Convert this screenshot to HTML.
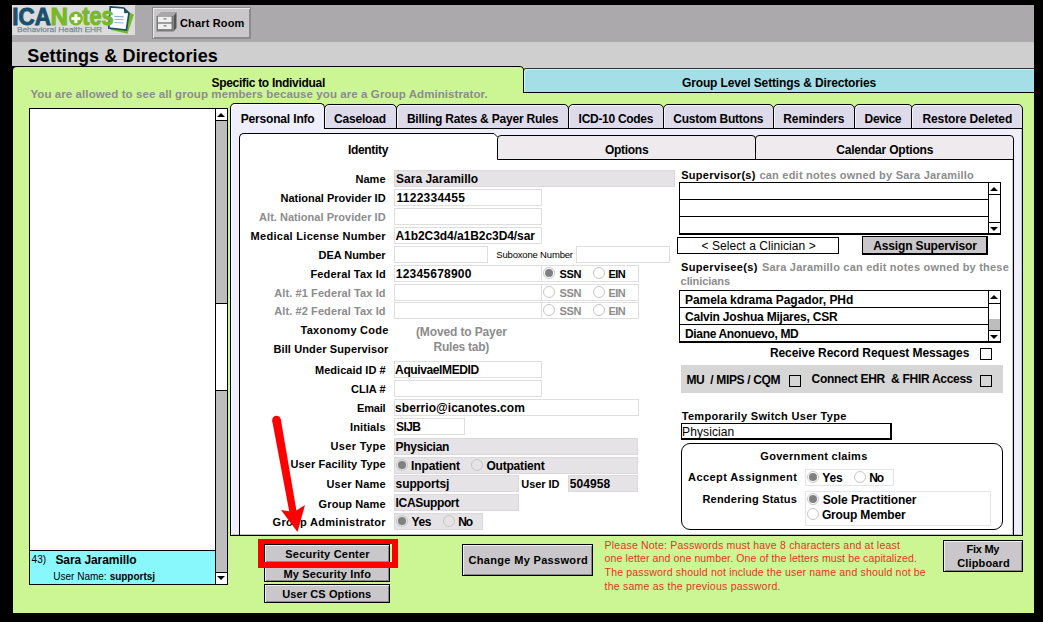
<!DOCTYPE html>
<html><head><meta charset="utf-8">
<style>
*{margin:0;padding:0;box-sizing:border-box}
html,body{width:1043px;height:622px;overflow:hidden;background:#000}
body{position:relative;font-family:"Liberation Sans",sans-serif;color:#000}
.a{position:absolute}
.t{position:absolute;white-space:nowrap;line-height:1}
</style></head><body>

<div class="a" style="left:12px;top:5px;width:1022px;height:37px;background:#aba9ab"></div>
<div class="a" style="left:12px;top:5px;width:123px;height:30px;background:#dcdcdc"></div>
<svg class="a" style="left:0;top:0" width="140" height="40">
<polygon points="126,11 134,14.5 127.5,33.8 110,29.8" fill="#79b829"/>
<polygon points="110.3,6.9 123.7,8 129,13 126.4,30 108.8,28" fill="#fff" stroke="#1b4f6f" stroke-width="1.7" stroke-linejoin="miter"/>
<polygon points="123.7,8 129,13 124.3,13.3" fill="#1b4f6f"/>
<line x1="114.3" y1="16.4" x2="123.7" y2="16.9" stroke="#8fb0d0" stroke-width="1.1"/>
<line x1="114.3" y1="19.3" x2="123.7" y2="19.8" stroke="#8fb0d0" stroke-width="1.1"/>
<line x1="114.3" y1="22.5" x2="123.7" y2="23" stroke="#8fb0d0" stroke-width="1.1"/>
<text x="12.3" y="24.8" font-family="Liberation Sans" font-weight="bold" font-size="24" fill="#1b4f6f" stroke="#1b4f6f" stroke-width="1" textLength="38.5" lengthAdjust="spacingAndGlyphs">ICA</text>
<text x="50.6" y="24.8" font-family="Liberation Sans" font-weight="bold" font-size="24" fill="#79b829" stroke="#79b829" stroke-width="1" textLength="17.5" lengthAdjust="spacingAndGlyphs">N</text>
<circle cx="75.9" cy="18.5" r="6.9" fill="#79b829"/>
<rect x="71.4" y="17.1" width="9" height="3" fill="#fff"/>
<rect x="74.4" y="14.1" width="3" height="9" fill="#fff"/>
<text x="82.2" y="24.9" font-family="Liberation Sans" font-weight="bold" font-size="25" fill="#79b829" stroke="#79b829" stroke-width="1" textLength="31.5" lengthAdjust="spacingAndGlyphs">tes</text>
<text x="17" y="31.8" font-family="Liberation Sans" font-size="8" fill="#7a8b98" stroke="#7a8b98" stroke-width="0.25" textLength="85" lengthAdjust="spacingAndGlyphs">Behavioral Health EHR</text>
</svg>
<div class="a" style="left:152px;top:7px;width:99px;height:32px;background:#c9c7c9;border:1px solid #8c8a8c;box-shadow:inset 1px 1px 0 #e8e8e8, inset -1px -1px 0 #8c8a8c"></div>
<svg class="a" style="left:150px;top:5px" width="30" height="32">
<polygon points="6.5,11 11,7 26.5,7 23.5,11" fill="#a8a8a8"/>
<polygon points="23.5,11 26.5,7 26.5,23 23.5,26.5" fill="#555"/>
<rect x="6.5" y="11" width="17" height="15.5" fill="#7a7a7a"/>
<rect x="8" y="11.6" width="13.5" height="5.7" fill="#f0f0f0"/>
<rect x="8" y="18.7" width="13.5" height="5.4" fill="#f0f0f0"/>
<rect x="13.5" y="13" width="3" height="1.6" fill="#9a9a9a"/>
<rect x="13.5" y="20" width="3" height="1.6" fill="#9a9a9a"/>
</svg>
<div class="t" style="left:180.00px;top:18px;font-size:11px;font-weight:bold;letter-spacing:0.161px;">Chart Room</div>
<div class="a" style="left:12px;top:42px;width:1022px;height:24px;background:#cfcfcf"></div>
<div class="t" style="left:27.30px;top:47px;font-size:18px;font-weight:bold;letter-spacing:0.117px;">Settings &amp; Directories</div>
<div class="a" style="left:13px;top:66px;width:1021px;height:547px;background:#ccf594;border-top:1px solid #000;border-radius:4px 0 0 0"></div>
<div class="a" style="left:519px;top:66px;width:515px;height:2px;background:#cfcfcf"></div>
<svg class="a" style="left:516px;top:64px" width="10" height="8"><path d="M0,2.5 L4.5,2.5 Q6.5,2.5 7.5,5 L7.5,8" fill="none" stroke="#000" stroke-width="1"/></svg>
<div class="a" style="left:523px;top:68px;width:511px;height:25px;background:#a4dfe8;border-top:1px solid #333;border-left:1px solid #000;border-bottom:1px solid #000;border-radius:3px 0 0 0;box-shadow:inset 1px 1px 0 #c4f6fc"></div>
<div class="t" style="left:682.00px;top:77px;font-size:12px;font-weight:bold;letter-spacing:-0.135px;">Group Level Settings &amp; Directories</div>
<div class="t" style="left:211.50px;top:77px;font-size:12px;font-weight:bold;letter-spacing:-0.298px;">Specific to Individual</div>
<div class="t" style="left:30.40px;top:89px;font-size:11.5px;font-weight:bold;color:#8c8c8c;letter-spacing:0.087px;">You are allowed to see all group members because you are a Group Administrator.</div>
<div class="a" style="left:29px;top:108px;width:199px;height:477px;background:#fff;border:1px solid #000"></div>
<div class="a" style="left:215px;top:108px;width:13px;height:477px;background:#bdbdbd;border:1px solid #000"></div>
<div class="a" style="left:216px;top:109px;width:11px;height:12px;background:#fff;border-bottom:1px solid #000"></div>
<div class="a" style="left:216px;top:303px;width:11px;height:88px;background:#fff;border-top:1px solid #000;border-bottom:1px solid #000"></div>
<div class="a" style="left:216px;top:572px;width:11px;height:12px;background:#fff;border-top:1px solid #000"></div>
<div class="a" style="left:217px;top:113px;width:0;height:0;border-left:4px solid transparent;border-right:4px solid transparent;border-bottom:4px solid #000"></div>
<div class="a" style="left:217px;top:576px;width:0;height:0;border-left:4px solid transparent;border-right:4px solid transparent;border-top:4px solid #000"></div>
<div class="a" style="left:30px;top:550px;width:185px;height:34px;background:#88f8fc;border-top:1px solid #000"></div>
<div class="t" style="left:31.60px;top:555px;font-size:10px;font-weight:normal;">43)</div>
<div class="t" style="left:55.40px;top:554px;font-size:12px;font-weight:bold;letter-spacing:-0.073px;">Sara Jaramillo</div>
<div class="t" style="left:53.30px;top:572px;font-size:10px;font-weight:normal;">User Name:</div>
<div class="t" style="left:109.70px;top:572px;font-size:10px;font-weight:bold;letter-spacing:-0.031px;">supportsj</div>
<div class="a" style="left:230px;top:128px;width:793px;height:408px;background:#eeeefc;border-left:1px solid #000;border-right:1px solid #000;border-bottom:1px solid #000;box-shadow:inset 1px 0 0 #fff, inset -1px -1px 0 #c4c2cc"></div>
<div class="a" style="left:230px;top:103px;width:95px;height:26px;background:#eeeefc;border:1px solid #000;border-bottom:none;border-radius:5px 5px 0 0;box-shadow:inset 1px 1px 0 #fff"></div>
<div class="a" style="left:324px;top:104px;width:73px;height:25px;background:#dddaea;border:1px solid #000;border-radius:5px 5px 0 0;box-shadow:inset 1px 1px 0 #f4f4fa"></div>
<div class="a" style="left:396px;top:104px;width:173px;height:25px;background:#dddaea;border:1px solid #000;border-radius:5px 5px 0 0;box-shadow:inset 1px 1px 0 #f4f4fa"></div>
<div class="a" style="left:568px;top:104px;width:96px;height:25px;background:#dddaea;border:1px solid #000;border-radius:5px 5px 0 0;box-shadow:inset 1px 1px 0 #f4f4fa"></div>
<div class="a" style="left:663px;top:104px;width:111px;height:25px;background:#dddaea;border:1px solid #000;border-radius:5px 5px 0 0;box-shadow:inset 1px 1px 0 #f4f4fa"></div>
<div class="a" style="left:773px;top:104px;width:82px;height:25px;background:#dddaea;border:1px solid #000;border-radius:5px 5px 0 0;box-shadow:inset 1px 1px 0 #f4f4fa"></div>
<div class="a" style="left:854px;top:104px;width:59px;height:25px;background:#dddaea;border:1px solid #000;border-radius:5px 5px 0 0;box-shadow:inset 1px 1px 0 #f4f4fa"></div>
<div class="a" style="left:911px;top:104px;width:112px;height:25px;background:#dddaea;border:1px solid #000;border-radius:5px 5px 0 0;box-shadow:inset 1px 1px 0 #f4f4fa"></div>
<div class="t" style="left:240.70px;top:113px;font-size:12px;font-weight:bold;letter-spacing:-0.167px;">Personal Info</div>
<div class="t" style="left:333.90px;top:113px;font-size:12px;font-weight:bold;letter-spacing:-0.164px;">Caseload</div>
<div class="t" style="left:406.90px;top:113px;font-size:12px;font-weight:bold;letter-spacing:-0.202px;">Billing Rates &amp; Payer Rules</div>
<div class="t" style="left:578.60px;top:113px;font-size:12px;font-weight:bold;letter-spacing:-0.291px;">ICD-10 Codes</div>
<div class="t" style="left:673.30px;top:113px;font-size:12px;font-weight:bold;letter-spacing:-0.242px;">Custom Buttons</div>
<div class="t" style="left:783.30px;top:113px;font-size:12px;font-weight:bold;letter-spacing:-0.106px;">Reminders</div>
<div class="t" style="left:864.60px;top:113px;font-size:12px;font-weight:bold;letter-spacing:-0.380px;">Device</div>
<div class="t" style="left:922.50px;top:113px;font-size:12px;font-weight:bold;letter-spacing:-0.118px;">Restore Deleted</div>
<div class="a" style="left:324px;top:128px;width:699px;height:1px;background:#000"></div>
<div class="a" style="left:239px;top:140px;width:775px;height:396px;background:#fff;border:1px solid #000;border-top:none;box-shadow:inset -1px -1px 0 #c4c2cc"></div>
<div class="a" style="left:239px;top:133px;width:255px;height:10px;background:#fff;border:1px solid #000;border-right:none;border-bottom:none;border-radius:5px 0 0 0"></div>
<div class="a" style="left:494px;top:134px;width:4px;height:6px;background:#fff"></div>
<svg class="a" style="left:490px;top:130px" width="12" height="10"><path d="M0,3.5 L4,3.5 L7.5,7" fill="none" stroke="#000" stroke-width="1"/></svg>
<div class="a" style="left:497px;top:135px;width:259px;height:25px;background:#eeeaee;border:1px solid #000;border-radius:4px 4px 0 0"></div>
<div class="a" style="left:755px;top:135px;width:259px;height:25px;background:#eeeaee;border:1px solid #000;border-radius:4px 4px 0 0"></div>
<div class="t" style="left:348.00px;top:144px;font-size:12px;font-weight:bold;letter-spacing:-0.336px;">Identity</div>
<div class="t" style="left:604.90px;top:144px;font-size:12px;font-weight:bold;letter-spacing:-0.275px;">Options</div>
<div class="t" style="left:836.30px;top:144px;font-size:12px;font-weight:bold;letter-spacing:-0.200px;">Calendar Options</div>
<div class="t" style="left:300.60px;top:325px;font-size:11px;font-weight:bold;letter-spacing:0.246px;">Taxonomy Code</div>
<div class="t" style="left:273.40px;top:344px;font-size:11px;font-weight:bold;letter-spacing:0.123px;">Bill Under Supervisor</div>
<div class="a" style="left:394px;top:170px;width:281px;height:17px;background:#e6e3e6;border:1px solid #dbd8db"></div>
<div class="a" style="left:394px;top:189px;width:148px;height:17px;background:#fff;border:1px solid #dedede"></div>
<div class="a" style="left:394px;top:208px;width:148px;height:17px;background:#fff;border:1px solid #dedede"></div>
<div class="a" style="left:394px;top:227px;width:148px;height:17px;background:#fff;border:1px solid #dedede"></div>
<div class="a" style="left:394px;top:246px;width:94px;height:17px;background:#fff;border:1px solid #dedede"></div>
<div class="t" style="left:496.30px;top:250px;font-size:9.5px;font-weight:normal;letter-spacing:-0.179px;">Suboxone Number</div>
<div class="a" style="left:576px;top:246px;width:94px;height:17px;background:#fff;border:1px solid #dedede"></div>
<div class="a" style="left:394px;top:265px;width:148px;height:17px;background:#fff;border:1px solid #dedede"></div>
<div class="a" style="left:541px;top:265px;width:98px;height:17px;background:#fff;border:1px solid #dedede"></div>
<div class="a" style="left:394px;top:284px;width:148px;height:17px;background:#fff;border:1px solid #dedede"></div>
<div class="a" style="left:541px;top:284px;width:98px;height:17px;background:#fff;border:1px solid #dedede"></div>
<div class="a" style="left:394px;top:302px;width:148px;height:17px;background:#fff;border:1px solid #dedede"></div>
<div class="a" style="left:541px;top:302px;width:98px;height:17px;background:#fff;border:1px solid #dedede"></div>
<div class="a" style="left:543px;top:267px;width:12px;height:12px;border-radius:50%;border:1px solid #c6c6c6;background:#fff"></div>
<div class="a" style="left:545px;top:269px;width:8px;height:8px;border-radius:50%;background:#808080"></div>
<div class="t" style="left:559.50px;top:269px;font-size:11px;font-weight:bold;letter-spacing:-0.300px;">SSN</div>
<div class="a" style="left:593px;top:267px;width:12px;height:12px;border-radius:50%;border:1px solid #c6c6c6;background:#fff"></div>
<div class="t" style="left:608.40px;top:269px;font-size:11px;font-weight:bold;letter-spacing:-0.575px;">EIN</div>
<div class="a" style="left:543px;top:286px;width:12px;height:12px;border-radius:50%;border:1px solid #c6c6c6;background:#fff"></div>
<div class="t" style="left:559.50px;top:288px;font-size:11px;font-weight:bold;color:#8c8c8c;letter-spacing:-0.300px;">SSN</div>
<div class="a" style="left:593px;top:286px;width:12px;height:12px;border-radius:50%;border:1px solid #c6c6c6;background:#fff"></div>
<div class="t" style="left:608.40px;top:288px;font-size:11px;font-weight:bold;color:#8c8c8c;letter-spacing:-0.575px;">EIN</div>
<div class="a" style="left:543px;top:304px;width:12px;height:12px;border-radius:50%;border:1px solid #c6c6c6;background:#fff"></div>
<div class="t" style="left:559.50px;top:306px;font-size:11px;font-weight:bold;color:#8c8c8c;letter-spacing:-0.300px;">SSN</div>
<div class="a" style="left:593px;top:304px;width:12px;height:12px;border-radius:50%;border:1px solid #c6c6c6;background:#fff"></div>
<div class="t" style="left:608.40px;top:306px;font-size:11px;font-weight:bold;color:#8c8c8c;letter-spacing:-0.575px;">EIN</div>
<div class="t" style="left:416.00px;top:326px;font-size:12px;font-weight:bold;color:#8c8c8c;letter-spacing:-0.129px;">(Moved to Payer</div>
<div class="t" style="left:433.60px;top:341px;font-size:12px;font-weight:bold;color:#8c8c8c;letter-spacing:-0.256px;">Rules tab)</div>
<div class="a" style="left:394px;top:361px;width:148px;height:17px;background:#fff;border:1px solid #dedede"></div>
<div class="a" style="left:394px;top:380px;width:148px;height:17px;background:#fff;border:1px solid #dedede"></div>
<div class="a" style="left:394px;top:399px;width:245px;height:17px;background:#fff;border:1px solid #dedede"></div>
<div class="a" style="left:394px;top:418px;width:71px;height:17px;background:#fff;border:1px solid #dedede"></div>
<div class="a" style="left:394px;top:438px;width:244px;height:17px;background:#e6e3e6;border:1px solid #dbd8db"></div>
<div class="a" style="left:394px;top:457px;width:244px;height:17px;background:#e6e3e6;border:1px solid #dbd8db"></div>
<div class="a" style="left:394px;top:475px;width:125px;height:17px;background:#e6e3e6;border:1px solid #dbd8db"></div>
<div class="a" style="left:568px;top:475px;width:70px;height:17px;background:#e6e3e6;border:1px solid #dbd8db"></div>
<div class="a" style="left:394px;top:494px;width:125px;height:17px;background:#e6e3e6;border:1px solid #dbd8db"></div>
<div class="a" style="left:394px;top:513px;width:89px;height:17px;background:#e6e3e6;border:1px solid #dbd8db"></div>
<div class="t" style="left:396.10px;top:173px;font-size:12px;font-weight:bold;">Sara Jaramillo</div>
<div class="t" style="left:396.60px;top:192px;font-size:12px;font-weight:bold;letter-spacing:0.244px;">1122334455</div>
<div class="t" style="left:395.50px;top:230px;font-size:12px;font-weight:bold;letter-spacing:-0.062px;">A1b2C3d4/a1B2c3D4/sar</div>
<div class="t" style="left:395.80px;top:268px;font-size:12px;font-weight:bold;letter-spacing:0.220px;">12345678900</div>
<div class="t" style="left:395.10px;top:364px;font-size:12px;font-weight:bold;letter-spacing:-0.383px;">AquivaelMEDID</div>
<div class="t" style="left:395.10px;top:402px;font-size:12px;font-weight:bold;letter-spacing:0.037px;">sberrio@icanotes.com</div>
<div class="t" style="left:396.10px;top:421px;font-size:12px;font-weight:bold;letter-spacing:-0.633px;">SIJB</div>
<div class="t" style="left:395.60px;top:441px;font-size:12px;font-weight:bold;letter-spacing:-0.281px;">Physician</div>
<div class="a" style="left:396px;top:459px;width:12px;height:12px;border-radius:50%;border:1px solid #c6c6c6;background:#e6e3e6"></div>
<div class="a" style="left:398px;top:461px;width:8px;height:8px;border-radius:50%;background:#808080"></div>
<div class="t" style="left:411.10px;top:460px;font-size:12px;font-weight:bold;letter-spacing:-0.138px;">Inpatient</div>
<div class="a" style="left:471px;top:459px;width:12px;height:12px;border-radius:50%;border:1px solid #c6c6c6;background:#e6e3e6"></div>
<div class="t" style="left:486.40px;top:460px;font-size:12px;font-weight:bold;letter-spacing:-0.189px;">Outpatient</div>
<div class="t" style="left:395.60px;top:478px;font-size:12px;font-weight:bold;letter-spacing:-0.106px;">supportsj</div>
<div class="t" style="left:521.30px;top:479px;font-size:11px;font-weight:bold;letter-spacing:-0.050px;">User ID</div>
<div class="t" style="left:569.70px;top:478px;font-size:12px;font-weight:bold;letter-spacing:0.090px;">504958</div>
<div class="t" style="left:395.60px;top:497px;font-size:12px;font-weight:bold;letter-spacing:-0.339px;">ICASupport</div>
<div class="a" style="left:396px;top:515px;width:12px;height:12px;border-radius:50%;border:1px solid #c6c6c6;background:#e6e3e6"></div>
<div class="a" style="left:398px;top:517px;width:8px;height:8px;border-radius:50%;background:#808080"></div>
<div class="t" style="left:411.40px;top:516px;font-size:12px;font-weight:bold;letter-spacing:-0.300px;">Yes</div>
<div class="a" style="left:443px;top:515px;width:12px;height:12px;border-radius:50%;border:1px solid #c6c6c6;background:#e6e3e6"></div>
<div class="t" style="left:458.30px;top:516px;font-size:12px;font-weight:bold;letter-spacing:-1.300px;">No</div>
<div class="t" style="left:355.40px;top:174px;font-size:11px;font-weight:bold;letter-spacing:0.083px;">Name</div>
<div class="t" style="left:280.45px;top:193px;font-size:11px;font-weight:bold;">National Provider ID</div>
<div class="t" style="left:259.10px;top:212px;font-size:11px;font-weight:bold;color:#8c8c8c;letter-spacing:0.025px;">Alt. National Provider ID</div>
<div class="t" style="left:250.60px;top:231px;font-size:11px;font-weight:bold;letter-spacing:0.286px;">Medical License Number</div>
<div class="t" style="left:318.60px;top:250px;font-size:11px;font-weight:bold;letter-spacing:-0.050px;">DEA Number</div>
<div class="t" style="left:310.40px;top:269px;font-size:11px;font-weight:bold;letter-spacing:0.158px;">Federal Tax Id</div>
<div class="t" style="left:274.20px;top:288px;font-size:11px;font-weight:bold;color:#8c8c8c;letter-spacing:0.102px;">Alt. #1 Federal Tax Id</div>
<div class="t" style="left:274.20px;top:306px;font-size:11px;font-weight:bold;color:#8c8c8c;letter-spacing:0.102px;">Alt. #2 Federal Tax Id</div>
<div class="t" style="left:315.00px;top:365px;font-size:11px;font-weight:bold;letter-spacing:0.025px;">Medicaid ID #</div>
<div class="t" style="left:350.90px;top:384px;font-size:11px;font-weight:bold;letter-spacing:0.050px;">CLIA #</div>
<div class="t" style="left:357.00px;top:403px;font-size:11px;font-weight:bold;letter-spacing:-0.188px;">Email</div>
<div class="t" style="left:350.00px;top:422px;font-size:11px;font-weight:bold;letter-spacing:0.107px;">Initials</div>
<div class="t" style="left:330.50px;top:441px;font-size:11px;font-weight:bold;letter-spacing:0.338px;">User Type</div>
<div class="t" style="left:290.50px;top:459px;font-size:11px;font-weight:bold;letter-spacing:0.103px;">User Facility Type</div>
<div class="t" style="left:326.40px;top:479px;font-size:11px;font-weight:bold;letter-spacing:0.213px;">User Name</div>
<div class="t" style="left:318.60px;top:499px;font-size:11px;font-weight:bold;letter-spacing:0.111px;">Group Name</div>
<div class="t" style="left:272.60px;top:517px;font-size:11px;font-weight:bold;letter-spacing:0.292px;">Group Administrator</div>
<div class="t" style="left:681.20px;top:170px;font-size:11px;font-weight:bold;letter-spacing:0.275px;">Supervisor(s)</div>
<div class="t" style="left:759.40px;top:170px;font-size:11px;font-weight:bold;color:#8c8c8c;letter-spacing:0.227px;">can edit notes owned by Sara Jaramillo</div>
<div class="a" style="left:679px;top:182px;width:322px;height:53px;background:#fff;border:1px solid #000;border-bottom:2px solid #000"></div>
<div class="a" style="left:679px;top:199px;width:309px;height:1px;background:#000"></div>
<div class="a" style="left:679px;top:216px;width:309px;height:1px;background:#000"></div>
<div class="a" style="left:988px;top:182px;width:1px;height:53px;background:#000"></div>
<div class="a" style="left:989px;top:194px;width:11px;height:1px;background:#000"></div>
<div class="a" style="left:989px;top:222px;width:11px;height:1px;background:#000"></div>
<div class="a" style="left:990px;top:187px;width:0;height:0;border-left:4px solid transparent;border-right:4px solid transparent;border-bottom:4px solid #000"></div>
<div class="a" style="left:990px;top:227px;width:0;height:0;border-left:4px solid transparent;border-right:4px solid transparent;border-top:4px solid #000"></div>
<div class="a" style="left:677px;top:237px;width:162px;height:17px;background:#fff;border:1px solid #000"></div>
<div class="t" style="left:701.40px;top:240px;font-size:12px;font-weight:normal;letter-spacing:0.079px;">&lt; Select a Clinician &gt;</div>
<div class="a" style="left:862px;top:236px;width:126px;height:19px;background:#c9c7c9;border:1px solid #000;border-right-width:2px;border-bottom-width:2px"></div>
<div class="t" style="left:873.30px;top:240px;font-size:12px;font-weight:bold;letter-spacing:-0.153px;">Assign Supervisor</div>
<div class="t" style="left:681.00px;top:262px;font-size:11px;font-weight:bold;letter-spacing:0.362px;">Supervisee(s)</div>
<div class="t" style="left:761.90px;top:262px;font-size:11px;font-weight:bold;color:#8c8c8c;letter-spacing:0.212px;">Sara Jaramillo can edit notes owned by these</div>
<div class="t" style="left:680.60px;top:276px;font-size:11px;font-weight:bold;color:#8c8c8c;letter-spacing:-0.072px;">clinicians</div>
<div class="a" style="left:679px;top:290px;width:322px;height:53px;background:#fff;border:1px solid #000;border-bottom:2px solid #000"></div>
<div class="a" style="left:679px;top:307px;width:309px;height:1px;background:#000"></div>
<div class="a" style="left:679px;top:324px;width:309px;height:1px;background:#000"></div>
<div class="a" style="left:988px;top:290px;width:1px;height:53px;background:#000"></div>
<div class="a" style="left:989px;top:303px;width:11px;height:1px;background:#000"></div>
<div class="a" style="left:989px;top:330px;width:11px;height:1px;background:#000"></div>
<div class="a" style="left:989px;top:319px;width:11px;height:11px;background:#bdbdbd"></div>
<div class="a" style="left:990px;top:295px;width:0;height:0;border-left:4px solid transparent;border-right:4px solid transparent;border-bottom:4px solid #000"></div>
<div class="a" style="left:990px;top:335px;width:0;height:0;border-left:4px solid transparent;border-right:4px solid transparent;border-top:4px solid #000"></div>
<div class="t" style="left:685.00px;top:294px;font-size:12px;font-weight:bold;letter-spacing:-0.044px;">Pamela kdrama Pagador, PHd</div>
<div class="t" style="left:685.00px;top:311px;font-size:12px;font-weight:bold;letter-spacing:-0.218px;">Calvin Joshua Mijares, CSR</div>
<div class="t" style="left:685.00px;top:328px;font-size:12px;font-weight:bold;letter-spacing:-0.344px;">Diane Anonuevo, MD</div>
<div class="t" style="left:769.90px;top:347px;font-size:12px;font-weight:bold;letter-spacing:-0.065px;">Receive Record Request Messages</div>
<div class="a" style="left:980px;top:348px;width:12px;height:12px;border:1px solid #000;background:#fff"></div>
<div class="a" style="left:681px;top:365px;width:322px;height:28px;background:#d6d6d6"></div>
<div class="t" style="left:686.40px;top:374px;font-size:12px;font-weight:bold;letter-spacing:-0.350px;white-space:pre;">MU  / MIPS / CQM</div>
<div class="a" style="left:789px;top:375px;width:12px;height:12px;border:1px solid #000;background:#d6d6d6"></div>
<div class="t" style="left:811.50px;top:373px;font-size:12px;font-weight:bold;letter-spacing:-0.290px;white-space:pre;">Connect EHR  &amp; FHIR Access</div>
<div class="a" style="left:980px;top:375px;width:12px;height:12px;border:1px solid #000;background:#d6d6d6"></div>
<div class="t" style="left:681.70px;top:411px;font-size:11px;font-weight:bold;letter-spacing:0.319px;">Temporarily Switch User Type</div>
<div class="a" style="left:681px;top:423px;width:211px;height:17px;background:#fff;border:1px solid #000;border-right-width:2px;border-bottom-width:2px"></div>
<div class="t" style="left:682.10px;top:426px;font-size:12px;font-weight:normal;letter-spacing:0.094px;">Physician</div>
<div class="a" style="left:681px;top:443px;width:322px;height:87px;background:#fff;border:1.5px solid #000;border-radius:9px"></div>
<div class="t" style="left:760.30px;top:451px;font-size:11px;font-weight:bold;letter-spacing:0.306px;">Government claims</div>
<div class="t" style="left:688.10px;top:472px;font-size:11px;font-weight:bold;letter-spacing:0.406px;">Accept Assignment</div>
<div class="t" style="left:702.40px;top:494px;font-size:11px;font-weight:bold;letter-spacing:0.230px;">Rendering Status</div>
<div class="a" style="left:805px;top:469px;width:89px;height:17px;background:#fff;border:1px solid #e4e4e4"></div>
<div class="a" style="left:807px;top:471px;width:12px;height:12px;border-radius:50%;border:1px solid #c6c6c6;background:#fff"></div>
<div class="a" style="left:809px;top:473px;width:8px;height:8px;border-radius:50%;background:#808080"></div>
<div class="t" style="left:822.20px;top:472px;font-size:12px;font-weight:bold;letter-spacing:-0.150px;">Yes</div>
<div class="a" style="left:854px;top:471px;width:12px;height:12px;border-radius:50%;border:1px solid #c6c6c6;background:#fff"></div>
<div class="t" style="left:869.30px;top:472px;font-size:12px;font-weight:bold;letter-spacing:-1.300px;">No</div>
<div class="a" style="left:805px;top:491px;width:186px;height:35px;background:#fff;border:1px solid #e4e4e4"></div>
<div class="a" style="left:807px;top:493px;width:12px;height:12px;border-radius:50%;border:1px solid #c6c6c6;background:#fff"></div>
<div class="a" style="left:809px;top:495px;width:8px;height:8px;border-radius:50%;background:#808080"></div>
<div class="t" style="left:822.70px;top:494px;font-size:12px;font-weight:bold;letter-spacing:-0.097px;">Sole Practitioner</div>
<div class="a" style="left:807px;top:508px;width:12px;height:12px;border-radius:50%;border:1px solid #c6c6c6;background:#fff"></div>
<div class="t" style="left:821.90px;top:509px;font-size:12px;font-weight:bold;letter-spacing:-0.150px;">Group Member</div>
<div class="a" style="left:264px;top:584px;width:126px;height:19px;background:#c9c7c9;border:1px solid #000;box-shadow:inset 1px 1px 0 #eee, inset -1px -1px 0 #888"></div>
<div class="t" style="left:282.20px;top:589px;font-size:11px;font-weight:bold;letter-spacing:0.114px;">User CS Options</div>
<div class="a" style="left:264px;top:563px;width:126px;height:19px;background:#c9c7c9;border:1px solid #000;box-shadow:inset 1px 1px 0 #eee, inset -1px -1px 0 #888"></div>
<div class="t" style="left:283.40px;top:569px;font-size:11px;font-weight:bold;letter-spacing:0.170px;">My Security Info</div>
<div class="a" style="left:264px;top:544px;width:126px;height:19px;background:#c9c7c9;border:1px solid #000;box-shadow:inset 1px 1px 0 #eee, inset -1px -1px 0 #888"></div>
<div class="t" style="left:285.30px;top:549px;font-size:11px;font-weight:bold;letter-spacing:0.214px;">Security Center</div>
<div class="a" style="left:258px;top:539px;width:140px;height:29px;border:6px solid #ff0000;border-top-width:5.5px"></div>
<div class="a" style="left:462px;top:544px;width:131px;height:32px;background:#c9c7c9;border:1px solid #000;box-shadow:inset 1px 1px 0 #eee, inset -1px -1px 0 #888"></div>
<div class="t" style="left:468.50px;top:555px;font-size:11px;font-weight:bold;letter-spacing:0.324px;">Change My Password</div>
<div class="t" style="left:604.60px;top:540px;font-size:10.5px;font-weight:normal;color:#e63323;letter-spacing:0.204px;">Please Note: Passwords must have 8 characters and at least</div>
<div class="t" style="left:604.60px;top:553px;font-size:10.5px;font-weight:normal;color:#e63323;letter-spacing:0.118px;">one letter and one number. One of the letters must be capitalized.</div>
<div class="t" style="left:604.60px;top:567px;font-size:10.5px;font-weight:normal;color:#e63323;letter-spacing:0.180px;">The password should not include the user name and should not be</div>
<div class="t" style="left:604.60px;top:581px;font-size:10.5px;font-weight:normal;color:#e63323;letter-spacing:0.233px;">the same as the previous password.</div>
<div class="a" style="left:943px;top:540px;width:80px;height:32px;background:#c9c7c9;border:1px solid #000;box-shadow:inset 1px 1px 0 #eee, inset -1px -1px 0 #888"></div>
<div class="t" style="left:966.50px;top:544px;font-size:11px;font-weight:bold;letter-spacing:-0.250px;">Fix My</div>
<div class="t" style="left:957.30px;top:558px;font-size:11px;font-weight:bold;letter-spacing:0.131px;">Clipboard</div>
<svg class="a" style="left:0;top:0" width="1043" height="622"><circle cx="276.5" cy="420" r="4.3" fill="#ff0000"/><polygon points="272.2,420.8 280.8,419.2 297.2,515 290.2,516.5" fill="#ff0000"/><polygon points="281,510 297.5,532 305,505 294,512" fill="#ff0000"/></svg>
</body></html>
